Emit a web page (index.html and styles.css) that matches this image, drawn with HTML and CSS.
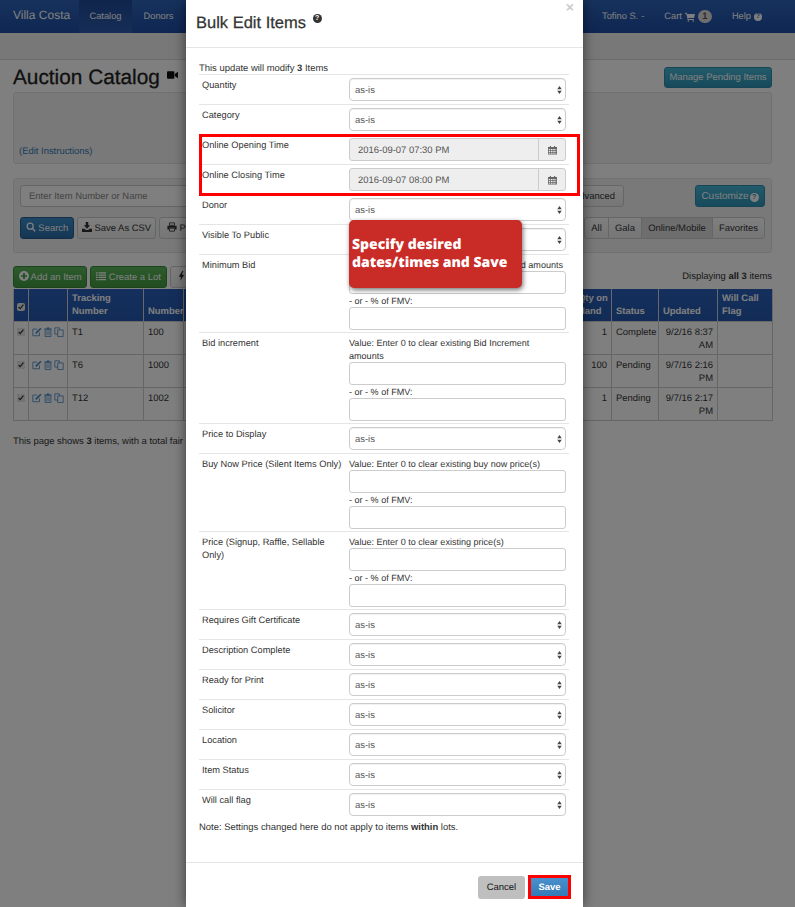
FILE: index.html
```html
<!DOCTYPE html>
<html lang="en">
<head>
<meta charset="utf-8">
<title>Auction Catalog</title>
<link rel="stylesheet" href="styles.css">
</head>
<body>
<svg class="sprite" aria-hidden="true">
  <symbol id="i-search" viewBox="0 0 12 12"><circle cx="5" cy="5" r="3.6" fill="none" stroke="currentColor" stroke-width="1.5"/><path d="M7.6 7.6 11 11" stroke="currentColor" stroke-width="1.8"/></symbol>
  <symbol id="i-down" viewBox="0 0 12 12"><path d="M4.5 0h3v4h2.3L6 8 2.2 4h2.3z" fill="currentColor"/><path d="M0 8h3l1.5 1.5h3L9 8h3v4H0z" fill="currentColor"/></symbol>
  <symbol id="i-print" viewBox="0 0 12 12"><path d="M3 1h6v3H3z" fill="none" stroke="currentColor"/><path d="M0.5 4.5h11v4.5H9.5V7h-7v2H.5z" fill="currentColor"/><path d="M3 7.5h6v3.5H3z" fill="none" stroke="currentColor"/></symbol>
  <symbol id="i-plus" viewBox="0 0 12 12"><circle cx="6" cy="6" r="6" fill="currentColor"/><path d="M5 2.5h2V5h2.500v2H7v2.500H5V7H2.500V5H5z" fill="#3f9a3f"/></symbol>
  <symbol id="i-list" viewBox="0 0 12 12"><path d="M0 1.500h2v1.500H0zM3 1.500h9v1.500H3zM0 4.200h2v1.500H0zM3 4.200h9v1.500H3zM0 6.900h2v1.500H0zM3 6.900h9v1.500H3zM0 9.600h2v1.500H0zM3 9.600h9v1.500H3z" fill="currentColor"/></symbol>
  <symbol id="i-bolt" viewBox="0 0 8 12"><path d="M5 0 0.800 6.800h2.700L2.400 12l4.800-7.500H4.300L6.200 0z" fill="currentColor"/></symbol>
  <symbol id="i-video" viewBox="0 0 12 10"><rect x="0" y="1" width="8" height="8" rx="1" fill="currentColor"/><path d="M8.500 4 12 1.500v7L8.500 6z" fill="currentColor"/></symbol>
  <symbol id="i-cart" viewBox="0 0 12 12"><path d="M0 1h2.200l.5 1.500H12l-1.200 4.800H3.800l.3 1.200h6.600v1H3.300L1.500 2H0z" fill="currentColor"/><circle cx="4" cy="10.800" r="1" fill="currentColor"/><circle cx="9.800" cy="10.800" r="1" fill="currentColor"/></symbol>
  <symbol id="i-edit" viewBox="0 0 12 12"><path d="M9 6.500V10.500H1V2.500H6" fill="none" stroke="currentColor" stroke-width="1"/><path d="M4.500 6 10 .8l1.500 1.400L6 7.700l-2 .4z" fill="currentColor"/></symbol>
  <symbol id="i-trash" viewBox="0 0 12 12"><path d="M4.500 .5h3v1.200h3v1.200h-9V1.700h3z" fill="currentColor"/><path d="M2.500 3.500h7v8h-7z" fill="none" stroke="currentColor"/><path d="M4.500 5v5M6 5v5M7.500 5v5" stroke="currentColor" stroke-width=".7"/></symbol>
  <symbol id="i-copy" viewBox="0 0 12 12"><path d="M1 1h5.500v7.500H1z" fill="none" stroke="currentColor"/><path d="M4.500 3.500h6.500v8H4.500z" fill="#fff" stroke="currentColor"/></symbol>
  <symbol id="i-cal" viewBox="0 0 12 12"><path d="M0 2h2.500V.5h1.500V2h4V.5h1.500V2H12v10H0z" fill="currentColor"/><path d="M1 4.500h2v1.500H1zM4 4.500h2v1.500H4zM7 4.500h2v1.500H7zM10 4.500h1v1.500h-1zM1 7h2v1.500H1zM4 7h2v1.500H4zM7 7h2v1.500H7zM10 7h1v1.500h-1zM1 9.500h2V11H1zM4 9.500h2V11H4zM7 9.500h2V11H7zM10 9.500h1V11h-1z" fill="#eee"/></symbol>
  <symbol id="i-updown" viewBox="0 0 6 10"><path d="M3 0 5.800 4H.2zM3 10 .2 6h5.600z" fill="currentColor"/></symbol>
</svg>

<div class="page">
  <nav class="navbar">
    <a class="brand">Villa Costa</a>
    <a class="nav-link active">Catalog</a>
    <a class="nav-link">Donors</a>
    <div class="nav-right">
      <a class="nav-item">Tofino S. <span class="caret-dash">-</span></a>
      <a class="nav-item">Cart <svg class="ico ico-cart"><use href="#i-cart"/></svg><span class="badge">1</span></a>
      <a class="nav-item">Help <span class="qmark qmark-nav">?</span></a>
    </div>
  </nav>
  <div class="subnav"></div>

  <main class="main">
    <div class="title-row">
      <h1 class="page-title">Auction Catalog <svg class="ico ico-video"><use href="#i-video"/></svg></h1>
      <button class="btn btn-info btn-manage">Manage Pending Items</button>
    </div>
    <div class="well well-instr"><a class="link">(Edit Instructions)</a></div>

    <div class="well well-filter">
      <div class="filter-row">
        <input class="search-input" placeholder="Enter Item Number or Name">
        <button class="btn btn-default btn-adv">Advanced</button>
        <button class="btn btn-info btn-customize">Customize<span class="qmark qmark-info">?</span></button>
      </div>
      <div class="filter-row filter-row-2">
        <button class="btn btn-primary"><svg class="ico"><use href="#i-search"/></svg> Search</button>
        <button class="btn btn-default btn-csv"><svg class="ico"><use href="#i-down"/></svg> Save As CSV</button>
        <button class="btn btn-default"><svg class="ico"><use href="#i-print"/></svg> Print</button>
        <div class="btn-group">
          <button class="seg">All</button><button class="seg">Gala</button><button class="seg seg-active">Online/Mobile</button><button class="seg">Favorites</button>
        </div>
      </div>
    </div>

    <div class="toolbar">
      <button class="btn btn-success"><svg class="ico"><use href="#i-plus"/></svg> Add an Item</button>
      <button class="btn btn-success"><svg class="ico"><use href="#i-list"/></svg> Create a Lot</button>
      <button class="btn btn-default btn-bulk"><svg class="ico ico-bolt"><use href="#i-bolt"/></svg> Bulk Actions</button>
      <span class="displaying">Displaying <b>all 3</b> items</span>
    </div>

    <table class="items">
      <colgroup>
        <col class="c-check"><col class="c-act"><col class="c-track"><col class="c-num"><col class="c-name"><col class="c-qty"><col class="c-status"><col class="c-upd"><col class="c-flag">
      </colgroup>
      <thead>
        <tr><th><input type="checkbox" class="chk" checked></th><th></th><th>Tracking Number</th><th>Number</th><th>Name</th><th>Qty on Hand</th><th>Status</th><th>Updated</th><th>Will Call Flag</th></tr>
      </thead>
      <tbody>
        <tr>
          <td class="ck"><input type="checkbox" class="chk" checked></td>
          <td class="acts"><svg class="ico"><use href="#i-edit"/></svg><svg class="ico"><use href="#i-trash"/></svg><svg class="ico"><use href="#i-copy"/></svg></td>
          <td>T1</td><td>100</td><td>Item</td><td class="num">1</td><td>Complete</td><td class="num">9/2/16 8:37 AM</td><td></td>
        </tr>
        <tr>
          <td class="ck"><input type="checkbox" class="chk" checked></td>
          <td class="acts"><svg class="ico"><use href="#i-edit"/></svg><svg class="ico"><use href="#i-trash"/></svg><svg class="ico"><use href="#i-copy"/></svg></td>
          <td>T6</td><td>1000</td><td>Item</td><td class="num">100</td><td>Pending</td><td class="num">9/7/16 2:16 PM</td><td></td>
        </tr>
        <tr>
          <td class="ck"><input type="checkbox" class="chk" checked></td>
          <td class="acts"><svg class="ico"><use href="#i-edit"/></svg><svg class="ico"><use href="#i-trash"/></svg><svg class="ico"><use href="#i-copy"/></svg></td>
          <td>T12</td><td>1002</td><td>Item</td><td class="num">1</td><td>Pending</td><td class="num">9/7/16 2:17 PM</td><td></td>
        </tr>
      </tbody>
    </table>
    <p class="summary">This page shows <b>3</b> items, with a total fair market value.</p>
  </main>
</div>

<div class="backdrop"></div>

<section class="modal">
  <header class="modal-head">
    <h2 class="modal-title">Bulk Edit Items <span class="qmark qmark-title">?</span></h2>
    <span class="close">×</span>
  </header>
  <div class="modal-body">
    <p class="intro">This update will modify <b>3</b> Items</p>

    <div class="row"><label>Quantity</label><div class="sel"><select><option>as-is</option></select><svg class="updown"><use href="#i-updown"/></svg></div></div>
    <div class="row"><label>Category</label><div class="sel"><select><option>as-is</option></select><svg class="updown"><use href="#i-updown"/></svg></div></div>
    <div class="row"><label>Online Opening Time</label><div class="date"><input value="2016-09-07 07:30 PM" disabled><span class="addon"><svg class="ico ico-cal"><use href="#i-cal"/></svg></span></div></div>
    <div class="row"><label>Online Closing Time</label><div class="date"><input value="2016-09-07 08:00 PM" disabled><span class="addon"><svg class="ico ico-cal"><use href="#i-cal"/></svg></span></div></div>
    <div class="row"><label>Donor</label><div class="sel"><select><option>as-is</option></select><svg class="updown"><use href="#i-updown"/></svg></div></div>
    <div class="row"><label>Visible To Public</label><div class="sel"><select><option>as-is</option></select><svg class="updown"><use href="#i-updown"/></svg></div></div>

    <div class="row row-multi"><label>Minimum Bid</label><div class="fields">
      <span>Value: Enter 0 to clear existing Minimum Bid amounts</span><input class="txt">
      <span>- or - % of FMV:</span><input class="txt"></div></div>
    <div class="row row-multi"><label>Bid increment</label><div class="fields">
      <span>Value: Enter 0 to clear existing Bid Increment amounts</span><input class="txt">
      <span>- or - % of FMV:</span><input class="txt"></div></div>
    <div class="row"><label>Price to Display</label><div class="sel"><select><option>as-is</option></select><svg class="updown"><use href="#i-updown"/></svg></div></div>
    <div class="row row-multi"><label>Buy Now Price (Silent Items Only)</label><div class="fields">
      <span>Value: Enter 0 to clear existing buy now price(s)</span><input class="txt">
      <span>- or - % of FMV:</span><input class="txt"></div></div>
    <div class="row row-multi"><label>Price (Signup, Raffle, Sellable Only)</label><div class="fields">
      <span>Value: Enter 0 to clear existing price(s)</span><input class="txt">
      <span>- or - % of FMV:</span><input class="txt"></div></div>
    <div class="row"><label>Requires Gift Certificate</label><div class="sel"><select><option>as-is</option></select><svg class="updown"><use href="#i-updown"/></svg></div></div>
    <div class="row"><label>Description Complete</label><div class="sel"><select><option>as-is</option></select><svg class="updown"><use href="#i-updown"/></svg></div></div>
    <div class="row"><label>Ready for Print</label><div class="sel"><select><option>as-is</option></select><svg class="updown"><use href="#i-updown"/></svg></div></div>
    <div class="row"><label>Solicitor</label><div class="sel"><select><option>as-is</option></select><svg class="updown"><use href="#i-updown"/></svg></div></div>
    <div class="row"><label>Location</label><div class="sel"><select><option>as-is</option></select><svg class="updown"><use href="#i-updown"/></svg></div></div>
    <div class="row"><label>Item Status</label><div class="sel"><select><option>as-is</option></select><svg class="updown"><use href="#i-updown"/></svg></div></div>
    <div class="row"><label>Will call flag</label><div class="sel"><select><option>as-is</option></select><svg class="updown"><use href="#i-updown"/></svg></div></div>

    <p class="note">Note: Settings changed here do not apply to items <b>within</b> lots.</p>
  </div>
  <footer class="modal-foot">
    <button class="foot-btn cancel">Cancel</button>
    <button class="foot-btn save">Save</button>
  </footer>

  <div class="red-frame"></div>
  <div class="callout">Specify desired dates/times and Save</div>
</section>
</body>
</html>
```

FILE: styles.css
```css
* { box-sizing: border-box; }
html, body { margin: 0; padding: 0; height: 907px; overflow: hidden; }
body { position: relative; background: #fff; font: 9.45px/13px "Liberation Sans", Arial, sans-serif; color: #333; text-rendering: geometricPrecision; }
.sprite { position: absolute; width: 0; height: 0; }
.ico { width: 10px; height: 10px; vertical-align: -1px; }
button, input, select { text-rendering: geometricPrecision; font-family: inherit; }

/* Navbar */
.navbar { height: 33px; display: flex; align-items: stretch; background: linear-gradient(#2e66b8, #1d4da6); color: #fff; font-size: 9.3px; line-height: 33px; }
.brand { padding: 0 13px; font-size: 12px; line-height: 31px; width: 79px; white-space: nowrap; }
.nav-link { padding: 0 10px; width: 53px; text-align: center; white-space: nowrap; }
.nav-link.active { background: linear-gradient(#1e4a98, #2d5cb0); }
.nav-right { margin-left: auto; display: flex; padding-right: 33px; }
.nav-item { margin-left: 20px; white-space: nowrap; display: flex; align-items: center; gap: 3px; }
.ico-cart { color: #fff; }
.badge { background: #ddd; color: #555; border-radius: 7px; width: 14px; height: 13px; line-height: 13px; text-align: center; font-weight: bold; }
.qmark { display: inline-block; border-radius: 50%; text-align: center; font-weight: bold; background: #fff; color: #2e66b8; }
.qmark-nav { width: 8px; height: 8px; font-size: 7px; line-height: 8px; }
.subnav { height: 27px; background: #f0f0f0; border-bottom: 1px solid #d8d4d4; }

/* Main */
.main { padding: 0 23px 0 13px; }
.title-row { display: flex; justify-content: space-between; height: 32px; padding-top: 7px; }
.page-title { margin: 0; font-size: 20.8px; line-height: 22px; font-weight: 500; color: #222; white-space: nowrap; -webkit-text-stroke: .3px #222; }
.ico-video { width: 11px; height: 10px; vertical-align: 4px; color: #111; margin-left: 1px; }
.well { background: #f3f3f3; border: 1px solid #e3e3e3; border-radius: 3px; }
.well-instr { height: 72px; padding: 52px 6px 0 5px; }
.link { color: #337ab7; }
.well-filter { margin-top: 14px; height: 75px; padding: 6px; }
.filter-row { display: flex; align-items: stretch; height: 22px; }
.filter-row-2 { margin-top: 10px; gap: 3px; }
.search-input { width: 540px; border: 1px solid #ccc; border-radius: 3px; padding: 0 8px; font: inherit; background: #fff; }
.search-input::placeholder { color: #888; }
.btn { border: 1px solid #ccc; border-radius: 3px; padding: 0 7px; font-size: 9.45px; line-height: 13px; white-space: nowrap; color: #333; background: #fff; }
.btn-default { background: linear-gradient(#fff, #ececec); }
.btn-info { background: linear-gradient(#45b6d6, #2d94b8); border-color: #2d8cac; color: #fff; }
.btn-primary { background: linear-gradient(#3a8ccc, #2a6ea8); border-color: #245d92; color: #fff; width: 54px; padding: 0; }
.btn-csv { width: 79px; padding: 0; }
.btn-success { background: linear-gradient(#5cb85c, #429a42); border-color: #3a8a3a; color: #fff; }
.btn-manage { width: 108px; height: 21px; padding: 0; }
.btn-adv { margin-left: 4px; width: 60px; padding: 0; }
.btn-customize { margin-left: auto; width: 70px; padding: 0; font-size: 10px; }
.qmark-info { width: 9px; height: 9px; font-size: 7px; line-height: 9px; margin-left: 1px; color: #2d94b8; }
.btn-group { margin-left: auto; display: flex; }
.seg { border: 1px solid #ccc; margin-left: -1px; padding: 0; background: linear-gradient(#fff, #ececec); font-size: 9.45px; color: #333; }
.seg:nth-child(1) { width: 25px; border-radius: 3px 0 0 3px; }
.seg:nth-child(2) { width: 34px; }
.seg:nth-child(3) { width: 72px; }
.seg:nth-child(4) { width: 53px; border-radius: 0 3px 3px 0; }
.seg-active { background: #ddd; }
.toolbar { margin-top: 13px; height: 23px; display: flex; gap: 3px; padding-bottom: 1px; position: relative; }
.toolbar .btn:nth-child(1) { width: 74px; padding: 0; }
.toolbar .btn:nth-child(2) { width: 77px; padding: 0; }
.btn-bulk { color: #a33; }
.ico-bolt { color: #222; width: 7px; }
.displaying { margin-left: auto; align-self: center; margin-top: -1px; }

/* Table */
.items { border-collapse: collapse; table-layout: fixed; width: 759px; }
.c-check { width: 15px; } .c-act { width: 39px; } .c-track { width: 76px; } .c-num { width: 40px; }
.c-name { width: 390px; } .c-qty { width: 38px; } .c-status { width: 47px; } .c-upd { width: 59px; } .c-flag { width: 55px; }
.items th { background: linear-gradient(#2a5fba, #2458ae); color: #fff; font-weight: bold; text-align: left; vertical-align: bottom; height: 32px; padding: 3px 1px 3px 4px; border: 1px solid #d0d0d0; border-top: 0; }
.items th:first-child { padding: 0 1px 5px; text-align: center; }
.items td { height: 33px; padding: 4px 4px 2px; vertical-align: top; border: 1px solid #ccc; background: #fff; }
.items td.num { text-align: right; }
.items td.ck { padding: 6px 1px 0; text-align: center; }
.items td.acts { padding: 5px 0 0 3px; white-space: nowrap; color: #4a8cc9; }
.acts .ico { margin-right: 1px; }
.chk { width: 8px; height: 8px; margin: 0; accent-color: #e8e8e8; vertical-align: top; }
.summary { margin: 14px 0 0; }

/* Backdrop and modal */
.backdrop { position: absolute; inset: 0; background: rgba(0, 0, 0, .5); }
.modal { position: absolute; left: 186px; top: 0; width: 397px; height: 907px; background: #fff; box-shadow: 0 0 12px rgba(0, 0, 0, .55); display: flex; flex-direction: column; }
.modal-head { height: 48px; border-bottom: 1px solid #e5e5e5; padding: 13px 10px 0; position: relative; }
.modal-title { margin: 0; font-size: 16.5px; line-height: 20px; font-weight: 500; color: #333; -webkit-text-stroke: .25px #333; }
.qmark-title { width: 9px; height: 9px; font-size: 7px; line-height: 9px; background: #333; color: #fff; vertical-align: 8px; margin-left: 2px; -webkit-text-stroke: 0; }
.close { position: absolute; right: 9px; top: 0; font-size: 14px; line-height: 14px; font-weight: bold; color: #ccc; }
.modal-body { flex: 1; padding: 14px 14px 0 13px; }
.intro { margin: 0; line-height: 12px; position: relative; top: 1px; }
.row { display: grid; grid-template-columns: 147px 217px; padding: 3px 0 3px 3px; border-top: 1px solid #e5e5e5; }
.row label { line-height: 13px; padding: 1px 4px 0 0; font-size: 9.25px; }
.row-multi { padding-bottom: 2px; }
.sel { position: relative; height: 23px; }
.sel select { appearance: none; width: 100%; height: 23px; border: 1px solid #ccc; border-radius: 4px; background: #fff; padding: 1px 5px 0; font: inherit; color: #555; box-shadow: inset 0 1px 1px rgba(0,0,0,.06); }
.updown { position: absolute; right: 4px; top: 8px; width: 5px; height: 8px; color: #444; pointer-events: none; }
.date { display: flex; height: 23px; border: 1px solid #ccc; border-radius: 3px; background: #eee; }
.date input { flex: 1; min-width: 0; border: 0; background: transparent; font: inherit; color: #555; padding: 1px 8px 0; }
.addon { width: 27px; border-left: 1px solid #ccc; display: flex; align-items: center; justify-content: center; color: #666; }
.ico-cal { width: 9px; height: 10px; }
.fields { display: flex; flex-direction: column; font-size: 9.05px; }
.fields span { padding-top: 1px; margin-bottom: -1px; }
.txt { height: 23px; border: 1px solid #ccc; border-radius: 3px; background: #fff; width: 100%; }
.note { margin: 1px 0 0; line-height: 13px; position: relative; top: 1px; }
.modal-foot { height: 45px; border-top: 1px solid #e5e5e5; display: flex; justify-content: flex-end; align-items: flex-start; padding: 13px 15px 0 0; gap: 6px; }
.foot-btn { border: 0; border-radius: 3px; font-size: 9.45px; padding: 0; }
.cancel { width: 47px; height: 23px; background: #bfbfbf; color: #111; }
.save { width: 37px; height: 18px; margin-top: 2px; background: linear-gradient(#4a90cc, #337ab7); color: #fff; font-weight: bold; outline: 3px solid #f00; border-radius: 0; }

/* Annotations */
.red-frame { position: absolute; left: 13px; top: 134px; width: 381px; height: 62px; border: 3px solid #f00; pointer-events: none; }
.callout { position: absolute; left: 163px; top: 220px; width: 173px; height: 68px; padding: 16px 3px 0; background: #c92b27; border-radius: 5px; box-shadow: 1px 2px 5px rgba(0, 0, 0, .55); color: #fff; font: 800 14px/18px "Open Sans", sans-serif; }
```
